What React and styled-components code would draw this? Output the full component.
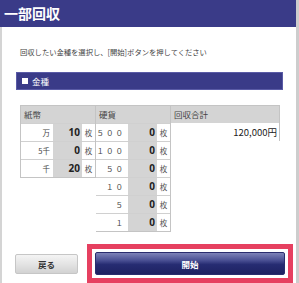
import React from 'react';
import styled, { createGlobalStyle } from 'styled-components';

const GlobalStyle = createGlobalStyle`
  html, body {
    margin: 0;
    padding: 0;
    background: #fff;
  }
  body {
    font-family: "Noto Sans CJK JP", "Noto Sans", sans-serif;
    color: #333;
  }
`;

const Frame = styled.div`
  width: 296px;
  height: 283px;
  border-right: 3px solid #cdcdcd;
  display: flex;
  flex-direction: column;
  overflow: hidden;
`;

const Header = styled.div`
  height: 27px;
  background: #3a3b88;
  color: #fff;
  font-size: 14px;
  font-weight: 700;
  line-height: 27px;
  padding-left: 4px;
  letter-spacing: 0;
`;

const Body = styled.div`
  flex: 1;
  border-left: 2px solid #d4d4d4;
  display: flex;
  flex-direction: column;
`;

const Instruction = styled.p`
  margin: 20px 0 0 18px;
  font-size: 7.3px;
  line-height: 10px;
  color: #444;
`;

const SectionBar = styled.div`
  margin: 15px 0 0 14px;
  width: 267px;
  height: 18px;
  background: #3a3b88;
  border: 1px solid #5a5ba6;
  box-sizing: border-box;
  color: #fff;
  font-size: 8.5px;
  line-height: 16px;
  padding-left: 5px;
  display: flex;
  align-items: center;
  gap: 4px;
`;

const Square = styled.span`
  width: 6px;
  height: 6px;
  background: #fff;
`;

const Table = styled.div`
  margin: 15px 0 0 18px;
  width: 260px;
  display: grid;
  grid-template-columns: 76px 75px 109px;
  align-items: start;
`;

const Group = styled.div`
  border: 1px solid #c4c4c4;
  border-left: ${(p) => (p.$first ? '1px solid #c4c4c4' : 'none')};
  box-sizing: border-box;
`;

const HeadCell = styled.div`
  height: 17px;
  background: #d4d4d4;
  font-size: 8.5px;
  line-height: 17px;
  padding-left: 3px;
  color: #444;
`;

const Row = styled.div`
  display: grid;
  grid-template-columns: 32px 29px 1fr;
  height: 17px;
  border-top: 1px solid #d0d0d0;
`;

const Label = styled.div`
  background: #fff;
  font-size: 7.5px;
  line-height: 17px;
  text-align: right;
  padding-right: 3px;
  color: #444;
  letter-spacing: ${(p) => (p.$spaced ? '2px' : '0')};
`;

const Value = styled.div`
  background: #d4d4d4;
  font-size: 10px;
  font-weight: 700;
  line-height: 17px;
  text-align: right;
  padding-right: 2px;
  color: #222;
  font-family: "Noto Sans", "Noto Sans CJK JP", sans-serif;
`;

const Unit = styled.div`
  background: #fff;
  font-size: 7.5px;
  line-height: 17px;
  text-align: center;
  color: #555;
`;

const TotalGroup = styled.div`
  border-top: 1px solid #c4c4c4;
  border-right: 1px solid #c4c4c4;
  box-sizing: border-box;
`;

const TotalValue = styled.div`
  border-top: 1px solid #fff;
  font-size: 9.5px;
  line-height: 17px;
  text-align: right;
  padding-right: 2px;
  color: #222;
`;

const Actions = styled.div`
  margin: 12px 0 0 13px;
  display: flex;
  align-items: center;
`;

const BackButton = styled.button`
  width: 63px;
  height: 20px;
  border: 1px solid #c6c6c6;
  border-radius: 2px;
  background: linear-gradient(#f4f4f4, #e4e4e4 50%, #d2d2d2);
  font-family: inherit;
  font-size: 8.5px;
  font-weight: 700;
  color: #333;
  padding: 0;
`;

const Highlight = styled.div`
  margin-left: 9px;
  width: 206px;
  height: 39px;
  border: 5px solid #e64060;
  box-sizing: border-box;
  padding: 3px;
  display: flex;
`;

const StartButton = styled.button`
  flex: 1;
  border: 1px solid #2a2d6e;
  border-radius: 2px;
  background: linear-gradient(#7e83b8, #4a5093 35%, #262c72 55%, #1e2262);
  color: #fff;
  font-family: inherit;
  font-size: 8.5px;
  font-weight: 700;
  padding: 0;
`;

const bills = [
  { label: '万', value: 10 },
  { label: '5千', value: 0 },
  { label: '千', value: 20 },
];

const coins = ['５００', '１００', '５０', '１０', '５', '１'];

const App = () => {
  return (
    <>
      <GlobalStyle />
      <Frame>
        <Header>一部回収</Header>
        <Body>
          <Instruction>回収したい金種を選択し、[開始]ボタンを押してください</Instruction>
          <SectionBar>
            <Square />
            金種
          </SectionBar>
          <Table>
            <Group $first>
              <HeadCell>紙幣</HeadCell>
              {bills.map((b) => (
                <Row key={b.label}>
                  <Label>{b.label}</Label>
                  <Value>{b.value}</Value>
                  <Unit>枚</Unit>
                </Row>
              ))}
            </Group>
            <Group>
              <HeadCell>硬貨</HeadCell>
              {coins.map((c) => (
                <Row key={c}>
                  <Label $spaced>{c}</Label>
                  <Value>0</Value>
                  <Unit>枚</Unit>
                </Row>
              ))}
            </Group>
            <TotalGroup>
              <HeadCell>回収合計</HeadCell>
              <TotalValue>120,000円</TotalValue>
            </TotalGroup>
          </Table>
          <Actions>
            <BackButton>戻る</BackButton>
            <Highlight>
              <StartButton>開始</StartButton>
            </Highlight>
          </Actions>
        </Body>
      </Frame>
    </>
  );
};

export default App;
